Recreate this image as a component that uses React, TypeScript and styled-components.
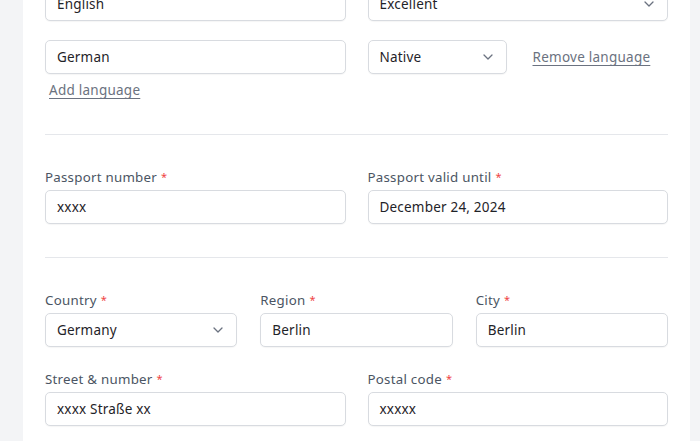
import React from "react";
import styled, { createGlobalStyle } from "styled-components";

const Global = createGlobalStyle`
  html, body { margin: 0; padding: 0; background: #f3f4f6; }
  body { font-family: "Noto Sans", "Open Sans", sans-serif; -webkit-font-smoothing: antialiased; }
  * { box-sizing: border-box; }
`;

const Page = styled.div`
  background: #f3f4f6;
  padding: 0 10px 0 23px;
  margin-top: -13px;
  height: 454px;
  overflow: hidden;
`;

const Card = styled.div`
  background: #ffffff;
  padding: 0 22px;
  height: 100%;
`;

const Grid = styled.div<{ $cols: number; $gap?: number; $mt?: number }>`
  display: grid;
  grid-template-columns: repeat(${(p) => p.$cols}, minmax(0, 1fr));
  column-gap: ${(p) => p.$gap ?? 22}px;
  margin-top: ${(p) => p.$mt ?? 0}px;
`;

const Inline = styled.div`
  display: flex;
  align-items: center;
  gap: 26px;
`;

const Field = styled.div`
  display: flex;
  flex-direction: column;
  gap: 4px;
`;

const Label = styled.label`
  font-size: 13.3px;
  line-height: 18px;
  color: #4b5563;
  letter-spacing: 0.25px;
`;

const Req = styled.span`
  color: #ef4444;
  margin-left: 4px;
  font-size: 11px;
  vertical-align: top;
`;

const Box = styled.div<{ $w?: number }>`
  height: 34px;
  width: ${(p) => (p.$w ? `${p.$w}px` : "100%")};
  flex: none;
  border: 1px solid #d8dbe0;
  border-radius: 5px;
  background: #fff;
  display: flex;
  align-items: center;
  justify-content: space-between;
  padding: 0 13px 0 11px;
  font-size: 13.5px;
  letter-spacing: 0.2px;
  color: #1f2328;
  box-shadow: 0 1px 1px rgba(0, 0, 0, 0.04);
`;

const Link = styled.a`
  font-size: 13.5px;
  line-height: 18px;
  letter-spacing: 0.25px;
  color: #6b7280;
  text-decoration: underline;
  text-underline-offset: 3px;
  text-decoration-thickness: 1px;
  cursor: pointer;
`;

const AddLink = styled(Link)`
  display: block;
  margin: 7px 0 0 4px;
  width: max-content;
`;

const Divider = styled.hr<{ $mt: number }>`
  border: none;
  border-top: 1px solid #e5e7eb;
  margin: ${(p) => p.$mt}px 0 33px 0;
`;

const Chevron = () => (
  <svg width="10" height="6" viewBox="0 0 10 6" fill="none">
    <path d="M1 1l4 4 4-4" stroke="#6b7280" strokeWidth="1.3" strokeLinecap="round" strokeLinejoin="round" />
  </svg>
);

const Input = ({ value }: { value: string }) => <Box>{value}</Box>;
const Select = ({ value, w }: { value: string; w?: number }) => (
  <Box $w={w}>
    <span>{value}</span>
    <Chevron />
  </Box>
);

const LabeledField = ({ label, children }: { label: string; children: React.ReactNode }) => (
  <Field>
    <Label>
      {label}
      <Req>*</Req>
    </Label>
    {children}
  </Field>
);

export default function App() {
  return (
    <>
      <Global />
      <Page>
        <Card>
          <Grid $cols={2}>
            <Input value="English" />
            <Select value="Excellent" />
          </Grid>
          <Grid $cols={2} $mt={19}>
            <Input value="German" />
            <Inline>
              <Select value="Native" w={139} />
              <Link>Remove language</Link>
            </Inline>
          </Grid>
          <AddLink>Add language</AddLink>
          <Divider $mt={35} />
          <Grid $cols={2}>
            <LabeledField label="Passport number">
              <Input value="xxxx" />
            </LabeledField>
            <LabeledField label="Passport valid until">
              <Input value="December 24, 2024" />
            </LabeledField>
          </Grid>
          <Divider $mt={33} />
          <Grid $cols={3} $gap={23}>
            <LabeledField label="Country">
              <Select value="Germany" />
            </LabeledField>
            <LabeledField label="Region">
              <Input value="Berlin" />
            </LabeledField>
            <LabeledField label="City">
              <Input value="Berlin" />
            </LabeledField>
          </Grid>
          <Grid $cols={2} $mt={23}>
            <LabeledField label="Street & number">
              <Input value="xxxx Straße xx" />
            </LabeledField>
            <LabeledField label="Postal code">
              <Input value="xxxxx" />
            </LabeledField>
          </Grid>
        </Card>
      </Page>
    </>
  );
}
